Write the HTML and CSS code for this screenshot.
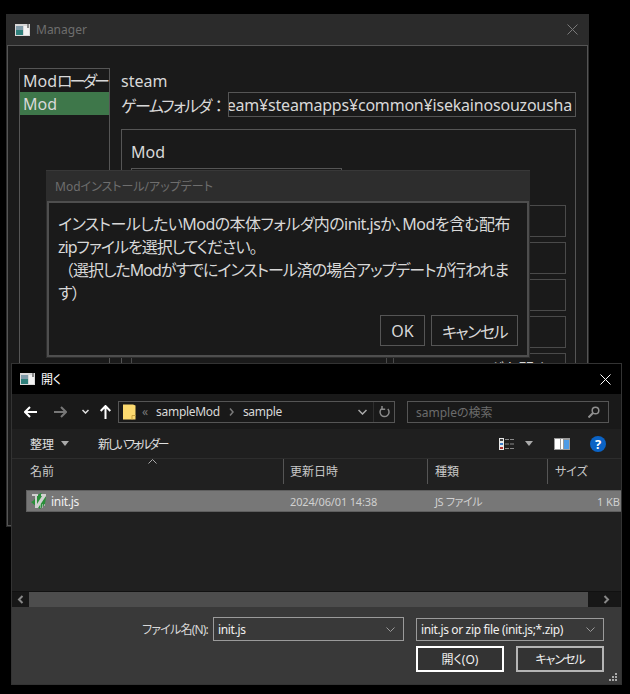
FILE: index.html
```html
<!DOCTYPE html>
<html lang="ja">
<head>
  <meta charset="utf-8">
  <title>Manager</title>
  <link rel="stylesheet" href="styles.css">
</head>
<body>

<!-- main app window -->
<div class="window manager">
  <div class="titlebar">
    <svg class="app-icon" width="15" height="12" viewBox="0 0 15 12"><rect width="15" height="12" fill="#d8d8d8"/><rect x="1" y="2" width="7" height="9" fill="#2f7f7a"/><rect x="1" y="2" width="7" height="4" fill="#7f9aa8"/><rect x="9" y="2" width="5" height="9" fill="#f2f2f2"/><rect x="12" y="0" width="2" height="4" fill="#8a8a8a"/></svg>
    <span class="title">Manager</span>
    <svg class="close" width="11" height="11" viewBox="0 0 11 11"><path d="M.5.5l10 10M10.500.5l-10 10" stroke="#7a7a7a" fill="none"/></svg>
  </div>
  <div class="manager-body">
    <div class="side-list">
      <div class="side-item">Mod<span class="side-kana">ローダー</span></div>
      <div class="side-item selected">Mod</div>
    </div>
    <div class="main-col">
      <div class="line">steam</div>
      <div class="folder-row">
        <span class="folder-label"><span class="kana">ゲームフォルダ</span><span class="full">：</span></span>
        <div class="path-box"><span>C:¥Program Files (x86)¥Steam¥steamapps¥common¥isekainosouzousha</span></div>
      </div>
      <div class="group">
        <div class="line group-title">Mod</div>
        <div class="combo"></div>
        <div class="mod-area">
          <div class="mod-list"></div>
          <div class="mod-buttons">
            <div class="mod-btn"></div>
            <div class="mod-btn"></div>
            <div class="mod-btn"></div>
            <div class="mod-btn"></div>
            <div class="mod-btn">Modフォルダを開く</div>
          </div>
        </div>
      </div>
    </div>
  </div>
</div>

<!-- install dialog -->
<div class="window modal">
  <div class="titlebar">
    <span class="title">Modインストール/アップデート</span>
  </div>
  <div class="modal-body">
    <p class="modal-text">インストールしたいModの本体フォルダ内のinit.jsか、Modを含む配布<br><span class="tight">zipファイルを選択してください。</span><br><span class="tight"><span class="full">（</span>選択したModがすでにインストール済の場合アップデートが行われま</span><br>す）</p>
    <div class="modal-buttons">
      <button class="btn btn-ok">OK</button>
      <button class="btn btn-cancel"><span class="kana">キャンセル</span></button>
    </div>
  </div>
</div>

<!-- native file dialog -->
<div class="window filedlg">
  <div class="fd-title">
    <svg width="15" height="12" viewBox="0 0 15 12"><rect width="15" height="12" fill="#d8d8d8"/><rect x="1" y="2" width="7" height="9" fill="#2f7f7a"/><rect x="1" y="2" width="7" height="4" fill="#7f9aa8"/><rect x="9" y="2" width="5" height="9" fill="#f2f2f2"/><rect x="12" y="0" width="2" height="4" fill="#8a8a8a"/></svg>
    <span class="fd-title-text">開く</span>
    <svg class="fd-close" width="11" height="11" viewBox="0 0 11 11"><path d="M.5.5l10 10M10.500.5l-10 10" stroke="#fff" fill="none"/></svg>
  </div>

  <div class="fd-nav">
    <svg class="nav-back" width="13" height="12" viewBox="0 0 13 12"><path d="M6 1L1 6l5 5M1 6h12" stroke="#fff" stroke-width="2" fill="none"/></svg>
    <svg class="nav-fwd" width="13" height="12" viewBox="0 0 13 12"><path d="M7 1l5 5-5 5M12 6H0" stroke="#777" stroke-width="2" fill="none"/></svg>
    <svg class="nav-drop" width="7" height="5" viewBox="0 0 7 5"><path d="M.5 1l3 3 3-3" stroke="#e0e0e0" stroke-width="1.500" fill="none"/></svg>
    <svg class="nav-up" width="11" height="14" viewBox="0 0 11 14"><path d="M.7 6l4.800-5 4.800 5M5.500 1v13" stroke="#fff" stroke-width="2" fill="none"/></svg>
    <div class="address">
      <svg class="folder" width="13" height="16" viewBox="0 0 13 16"><path d="M0 .5h10l2.500 1v14H0z" fill="#fbd96f"/><path d="M9 15.500v-4h3.500" fill="none" stroke="#c9a23f"/></svg>
      <span class="crumb-sep">«</span>
      <span class="crumb">sampleMod</span>
      <svg class="crumb-arrow" width="5" height="8" viewBox="0 0 5 8"><path d="M1 .5l3 3.500-3 3.500" stroke="#7a7a7a" stroke-width="1.500" fill="none"/></svg>
      <span class="crumb">sample</span>
      <svg class="addr-drop" width="9" height="6" viewBox="0 0 9 6"><path d="M.5 1l4 4 4-4" stroke="#aaa" stroke-width="1.500" fill="none"/></svg>
      <span class="addr-div"></span>
      <svg class="addr-refresh" width="11" height="12" viewBox="0 0 11 12"><path d="M8.800 3A4.500 4.500 0 1 1 3 2.400M3 0v3.200h3.200" stroke="#8a8a8a" stroke-width="1.500" fill="none"/></svg>
    </div>
    <div class="search">
      <span class="search-text">sampleの検索</span>
      <svg width="12" height="12" viewBox="0 0 12 12"><circle cx="7.500" cy="4.500" r="3.300" stroke="#8f8f8f" stroke-width="1.500" fill="none"/><path d="M5 7l-4.500 4.500" stroke="#8f8f8f" stroke-width="2"/></svg>
    </div>
  </div>

  <div class="fd-cmd">
    <span class="cmd-item">整理</span>
    <span class="tri"></span>
    <span class="cmd-new">新しいフォルダー</span>
    <svg class="view-icon" width="16" height="12" viewBox="0 0 16 12"><rect width="5" height="12" fill="#e8e8e8"/><rect x="1" y="1" width="3" height="2" fill="#444"/><rect x="1" y="5" width="3" height="2" fill="#3a7bc8"/><rect x="1" y="9" width="3" height="2" fill="#a33"/><path d="M6 1.500h4M11 1.500h4M6 6h4M11 6h4M6 10.500h4M11 10.500h4" stroke="#8a8a8a"/></svg>
    <span class="tri tri-view"></span>
    <svg class="pane-icon" width="16" height="12" viewBox="0 0 16 12"><rect width="16" height="12" fill="#9a9a9a"/><rect x="1" y="1" width="5" height="10" fill="#fff"/><rect x="7" y="1" width="2" height="10" fill="#fff"/><rect x="10" y="2" width="5" height="9" fill="#4d9be6"/></svg>
    <svg class="help-icon" width="16" height="16" viewBox="0 0 16 16"><circle cx="8" cy="8" r="8" fill="#0b63c5"/><text x="8" y="12.500" text-anchor="middle" class="help-mark">?</text></svg>
  </div>

  <div class="fd-head">
    <div class="col">名前<svg class="sort" width="9" height="5" viewBox="0 0 9 5"><path d="M.5 4.500l4-4 4 4" stroke="#aaa" fill="none"/></svg></div>
    <div class="col">更新日時</div>
    <div class="col">種類</div>
    <div class="col col-last">サイズ</div>
  </div>

  <div class="fd-list">
    <div class="file-row">
      <div class="file-name">
        <svg width="16" height="17" viewBox="0 0 16 17"><path d="M10 0l5 4-1 7-5 5-3-2-6-5 2-1 6-7z" fill="#2a8f3a"/><path d="M1 1h6v2H6v8l5-8h-1V1h5v2L7 15H4V3H1z" fill="#d0d0d0"/><path d="M9 12h6M9 14h4" stroke="#e4e4e4" stroke-dasharray="1 1"/></svg>
        <span>init.js</span>
      </div>
      <div class="file-date">2024/06/01 14:38</div>
      <div class="file-type">JS ファイル</div>
      <div class="file-size">1 KB</div>
    </div>
  </div>

  <div class="fd-scroll">
    <svg class="scroll-arrow" width="7" height="9" viewBox="0 0 7 9"><path d="M5.500 1L2 4.500 5.500 8" stroke="#888" stroke-width="2" fill="none"/></svg>
    <div class="scroll-thumb"></div>
    <svg class="scroll-arrow" width="7" height="9" viewBox="0 0 7 9"><path d="M1.500 1L5 4.500 1.500 8" stroke="#888" stroke-width="2" fill="none"/></svg>
  </div>

  <div class="fd-bottom">
    <div class="fd-row">
      <label class="fd-label">ファイル名(N):</label>
      <div class="fd-input">
        <span>init.js</span>
        <svg width="9" height="5" viewBox="0 0 9 5"><path d="M.5.500l4 4 4-4" stroke="#9a9a9a" fill="none"/></svg>
      </div>
      <div class="fd-select">
        <span>init.js or zip file (init.js;*.zip)</span>
        <svg width="9" height="5" viewBox="0 0 9 5"><path d="M.5.500l4 4 4-4" stroke="#9a9a9a" fill="none"/></svg>
      </div>
    </div>
    <div class="fd-row fd-actions">
      <button class="fd-btn fd-btn-default">開く(O)</button>
      <button class="fd-btn fd-btn-cancel">キャンセル</button>
    </div>
    <svg class="grip" width="8" height="8" viewBox="0 0 8 8"><path d="M6 0h2v2H6zM3 3h2v2H3zM6 3h2v2H6zM0 6h2v2H0zM3 6h2v2H3zM6 6h2v2H6z" fill="#aaa"/></svg>
  </div>
</div>

</body>
</html>
```

FILE: styles.css
```css
* {
  box-sizing: border-box;
}
html, body {
  margin: 0;
  height: 100%;
}
body {
  position: relative;
  width: 630px;
  height: 694px;
  overflow: hidden;
  background: #000;
  color: #d8d8d8;
  font-family: "Noto Sans", "Noto Sans CJK JP", sans-serif;
  font-feature-settings: "palt";
}

/* narrower kana, closer to the UI font of the screenshot */
.kana {
  letter-spacing: -1.5px;
}
.side-kana {
  letter-spacing: -3px;
}
.tight {
  letter-spacing: -1px;
}
.full {
  font-feature-settings: normal;
}

/* windows sit on a free desktop */
.window {
  position: absolute;
  display: flex;
  flex-direction: column;
}
.manager {
  left: 6px;
  top: 14px;
  width: 583px;
  height: 513px;
  padding: 0 1px 1px;
  background: #2b2b2b;
}
.modal {
  left: 46px;
  top: 170px;
  width: 484px;
  height: 188px;
  padding: 0 1px 1px;
  background: #2d2d2d;
  border-top: 1px solid #383838;
}
.filedlg {
  left: 11px;
  top: 363px;
  width: 611px;
  height: 322px;
  background: #202020;
  border: 1px solid #333;
}

.titlebar {
  display: flex;
  align-items: center;
  flex: 0 0 31px;
  padding: 0 10px 0 8px;
  font-size: 12px;
  color: #6e6e6e;
}
.modal .titlebar {
  flex-basis: 30px;
}
.app-icon {
  margin-right: 6px;
}
.close {
  margin-left: auto;
}

/* manager content */
.manager-body {
  flex: 1;
  display: flex;
  gap: 11px;
  min-height: 0;
  padding: 22px 11px 11px;
  background: #1a1a1a;
  border: 1px solid #555;
  font-size: 16px;
}
.side-list {
  flex: 0 0 91px;
  min-width: 0;
  border: 1px solid #555;
}
.side-item {
  height: 23px;
  line-height: 25px;
  padding-left: 3px;
  white-space: nowrap;
  overflow: hidden;
}
.side-item.selected {
  background: #3e774a;
}
.main-col {
  flex: 1;
  min-width: 0;
}
.line {
  height: 24px;
  line-height: 26px;
}
.group-title {
  line-height: 24px;
}
.folder-row {
  display: flex;
  align-items: center;
  height: 25px;
}
.folder-label {
  flex: 0 0 107px;
  white-space: nowrap;
}
.path-box {
  flex: 1;
  min-width: 0;
  display: flex;
  justify-content: flex-end;
  height: 25px;
  line-height: 25px;
  padding-right: 3px;
  border: 1px solid #555;
  overflow: hidden;
  white-space: nowrap;
  letter-spacing: -0.2px;
}
.path-box span {
  flex: none;
}
.group {
  height: 380px;
  margin-top: 12px;
  padding: 10px 9px;
  border: 1px solid #555;
}
.combo {
  width: 211px;
  height: 30px;
  margin-top: 4px;
  border: 1px solid #555;
}
.mod-area {
  display: flex;
  gap: 6px;
  margin-top: 7px;
}
.mod-list {
  width: 256px;
  height: 300px;
  border: 1px solid #4a4a4a;
}
.mod-buttons {
  flex: 1;
  display: flex;
  flex-direction: column;
  gap: 5px;
}
.mod-btn {
  height: 32px;
  line-height: 30px;
  text-align: center;
  font-size: 16px;
  border: 1px solid #4a4a4a;
}

/* install dialog */
.modal-body {
  flex: 1;
  display: flex;
  flex-direction: column;
  justify-content: space-between;
  padding: 10px 9px 9px;
  background: #1a1a1a;
  border: 2px solid #4e4e4e;
  font-size: 16px;
}
.modal-text {
  margin: 0;
  line-height: 23px;
  letter-spacing: -0.55px;
  white-space: nowrap;
}
.modal-buttons {
  display: flex;
  justify-content: flex-end;
  gap: 6px;
}
.btn {
  height: 31px;
  padding: 0;
  background: #1a1a1a;
  color: #d8d8d8;
  border: 1px solid #555;
  font: inherit;
  font-feature-settings: inherit;
}
.btn-ok {
  width: 45px;
}
.btn-cancel {
  width: 87px;
}

/* file dialog */
.fd-title {
  display: flex;
  align-items: center;
  flex: 0 0 30px;
  padding: 0 10px 0 8px;
  background: #000;
  color: #fff;
  font-size: 12px;
}
.fd-title-text {
  margin-left: 6px;
}
.fd-close {
  margin-left: auto;
}
.fd-nav {
  display: flex;
  align-items: center;
  flex: 0 0 35px;
  padding: 0 12px;
  background: #191919;
  font-size: 12px;
}
.nav-fwd {
  margin-left: 17px;
}
.nav-drop {
  margin-left: 15px;
}
.nav-up {
  margin-left: 11px;
}
.address {
  display: flex;
  align-items: center;
  flex: 0 0 277px;
  height: 22px;
  margin-left: 7px;
  padding-left: 4px;
  border: 1px solid #555;
}
.crumb-sep {
  margin: 0 8px 0 6px;
  color: #7a7a7a;
}
.crumb {
  color: #d8d8d8;
  letter-spacing: -0.3px;
}
.crumb-arrow {
  margin: 0 9px;
}
.addr-drop {
  margin-left: auto;
}
.addr-div {
  width: 1px;
  height: 20px;
  margin: 0 5px 0 6px;
  background: #2e2e2e;
}
.addr-refresh {
  margin-right: 4px;
}
.search {
  display: flex;
  align-items: center;
  justify-content: space-between;
  flex: 0 0 202px;
  height: 22px;
  margin-left: 12px;
  padding: 0 8px;
  border: 1px solid #555;
}
.search-text {
  color: #6c6c6c;
  font-size: 12px;
}
.fd-cmd {
  display: flex;
  align-items: center;
  flex: 0 0 30px;
  padding-left: 18px;
  background: #1f1f1f;
  border-bottom: 1px solid #2d2d2d;
  font-size: 12px;
  color: #e0e0e0;
}
.tri {
  width: 0;
  height: 0;
  margin-left: 7px;
  border: 4px solid transparent;
  border-top: 5px solid #aaa;
  border-bottom: 0;
}
.cmd-new {
  margin-left: 29px;
  letter-spacing: -2.2px;
}
.view-icon {
  margin-left: auto;
}
.tri-view {
  margin-left: 10px;
}
.pane-icon {
  margin-left: 21px;
}
.help-icon {
  margin: 0 15px 0 20px;
}
.help-mark {
  fill: #fff;
  font-size: 13px;
  font-weight: 700;
}
.fd-head {
  display: grid;
  grid-template-columns: 272px 144px 120px 1fr;
  flex: 0 0 31px;
  font-size: 12px;
  color: #c8c8c8;
}
.col {
  position: relative;
  height: 25px;
  line-height: 25px;
  padding-left: 18px;
  border-right: 1px solid #555;
}
.col + .col {
  padding-left: 6px;
}
.col + .col + .col {
  padding-left: 7px;
}
.col-last {
  border-right: 0;
}
.sort {
  position: absolute;
  left: 136px;
  top: 0;
}
.fd-list {
  flex: 1;
  padding-left: 14px;
}
.file-row {
  display: grid;
  grid-template-columns: 258px 144px 120px 1fr;
  align-items: center;
  height: 22px;
  background: #777;
  border: 1px solid #5f5f5f;
  border-right: 0;
  font-size: 11px;
}
.file-name {
  display: flex;
  align-items: center;
  gap: 4px;
  padding-left: 4px;
  color: #f0f0f0;
  font-size: 12px;
  letter-spacing: -0.3px;
}
.file-date, .file-type, .file-size {
  color: #d0d0d0;
}
.file-date {
  padding-left: 5px;
  letter-spacing: -0.15px;
}
.file-type {
  padding-left: 6px;
  letter-spacing: -0.4px;
}
.file-size {
  text-align: right;
  padding-right: 1px;
}
.fd-scroll {
  display: flex;
  align-items: center;
  flex: 0 0 16px;
  background: #171717;
  border-top: 1px solid #111;
}
.scroll-thumb {
  flex: 1;
  height: 100%;
  background: #4d4d4d;
}
.scroll-arrow {
  flex: 0 0 7px;
  margin: 0 5px;
}
.scroll-thumb + .scroll-arrow {
  margin: 0 11px 0 15px;
}
.fd-bottom {
  position: relative;
  flex: 0 0 77px;
  padding: 10px 17px 0 0;
  background: #393939;
  font-size: 12px;
}
.fd-row {
  display: flex;
  align-items: center;
}
.fd-label {
  flex: 1;
  margin-right: 5px;
  text-align: right;
  color: #d8d8d8;
  letter-spacing: -0.8px;
}
.fd-input, .fd-select {
  display: flex;
  align-items: center;
  justify-content: space-between;
  height: 24px;
  padding: 0 8px 0 4px;
  border: 1px solid #9b9b9b;
  color: #f0f0f0;
  letter-spacing: -0.35px;
}
.fd-input {
  width: 191px;
  margin-right: 12px;
}
.fd-select {
  width: 188px;
  height: 23px;
}
.fd-actions {
  justify-content: flex-end;
  gap: 12px;
  margin-top: 5px;
}
.fd-btn {
  width: 88px;
  height: 26px;
  padding: 0;
  background: #333;
  color: #f0f0f0;
  border: 2px solid #b5b5b5;
  font: inherit;
  font-feature-settings: inherit;
}
.fd-btn-default {
  border-color: #fff;
}
.fd-btn-cancel {
  letter-spacing: -1px;
}
.grip {
  position: absolute;
  right: 4px;
  bottom: 3px;
}
```
